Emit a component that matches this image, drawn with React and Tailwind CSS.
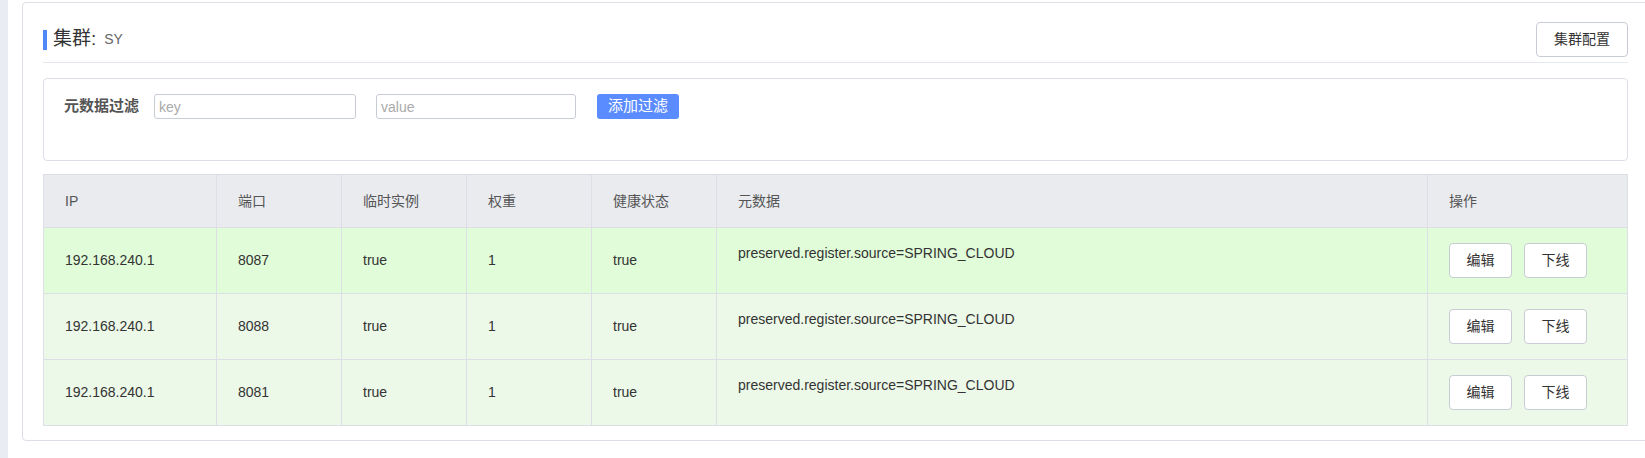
import React from "react";

const cols = ["IP", "端口", "临时实例", "权重", "健康状态", "元数据", "操作"];
const widths = "grid-cols-[173px_125px_125px_125px_125px_711px_200px]";

const rows = [
  { ip: "192.168.240.1", port: "8087", bg: "bg-[#e1fcd9]" },
  { ip: "192.168.240.1", port: "8088", bg: "bg-[#ecf8e8]" },
  { ip: "192.168.240.1", port: "8081", bg: "bg-[#ecf8e8]" },
];

function Cell({ children, className = "" }) {
  return (
    <div className={`border-r border-b border-[#dcdfe6] pl-[21px] flex items-center ${className}`}>
      {children}
    </div>
  );
}

function SmallButton({ children }) {
  return (
    <button className="w-[63px] h-[35px] rounded-[4px] border border-[#c8ccd4] bg-white text-[14px] text-[#333]">
      {children}
    </button>
  );
}

export default function App() {
  return (
    <div
      className="flex w-[1645px] h-[458px] overflow-hidden bg-white text-[14px] text-[#333]"
      style={{ fontFamily: '"Liberation Sans", "Noto Sans CJK SC", sans-serif' }}
    >
      <div className="w-[8px] shrink-0 bg-[#e9edf3]" />
      <div className="pl-[14px] pt-[2px] shrink-0">
        <div className="w-[1627px] h-[439px] border border-[#dcdfe6] rounded-[4px] px-[20px] pt-[19px]">
          {/* header */}
          <div className="flex items-center justify-between h-[35px]">
            <div className="flex items-center">
              <span className="w-[4px] h-[20px] bg-[#4f87f5]" />
              <span className="ml-[6px] text-[19px] text-[#333]">集群:</span>
              <span className="ml-[8px] text-[14px] text-[#666]">SY</span>
            </div>
            <button className="w-[92px] h-[35px] rounded-[4px] border border-[#c8ccd4] bg-white text-[14px] text-[#333]">
              集群配置
            </button>
          </div>
          <div className="mt-[5px] h-px bg-[#e4e7ed]" />

          {/* filter */}
          <div className="mt-[15px] h-[83px] border border-[#dcdfe6] rounded-[4px] pl-[20px] pt-[15px]">
            <div className="flex items-center h-[25px]">
              <span className="font-bold text-[#555] text-[15px] w-[90px]">元数据过滤</span>
              <input
                placeholder="key"
                className="w-[202px] h-[25px] border border-[#c8ccd4] rounded-[3px] px-[4px] text-[14px] placeholder:text-[#aaa] outline-none"
              />
              <input
                placeholder="value"
                className="ml-[20px] w-[200px] h-[25px] border border-[#c8ccd4] rounded-[3px] px-[4px] text-[14px] placeholder:text-[#aaa] outline-none"
              />
              <button className="ml-[21px] w-[82px] h-[25px] rounded-[3px] bg-[#5b8cff] text-white text-[15px]">
                添加过滤
              </button>
            </div>
          </div>

          {/* table */}
          <div className="mt-[13px] border-t border-l border-[#dcdfe6]">
            <div className={`grid ${widths} h-[53px] bg-[#e9ebef] text-[#555]`}>
              {cols.map((c) => (
                <Cell key={c}>{c}</Cell>
              ))}
            </div>
            {rows.map((r) => (
              <div key={r.port} className={`grid ${widths} h-[66px] ${r.bg}`}>
                <Cell>{r.ip}</Cell>
                <Cell>{r.port}</Cell>
                <Cell>true</Cell>
                <Cell>1</Cell>
                <Cell>true</Cell>
                <Cell className="!items-start pt-[15px]">preserved.register.source=SPRING_CLOUD</Cell>
                <Cell className="gap-[12px]">
                  <SmallButton>编辑</SmallButton>
                  <SmallButton>下线</SmallButton>
                </Cell>
              </div>
            ))}
          </div>
        </div>
      </div>
    </div>
  );
}
